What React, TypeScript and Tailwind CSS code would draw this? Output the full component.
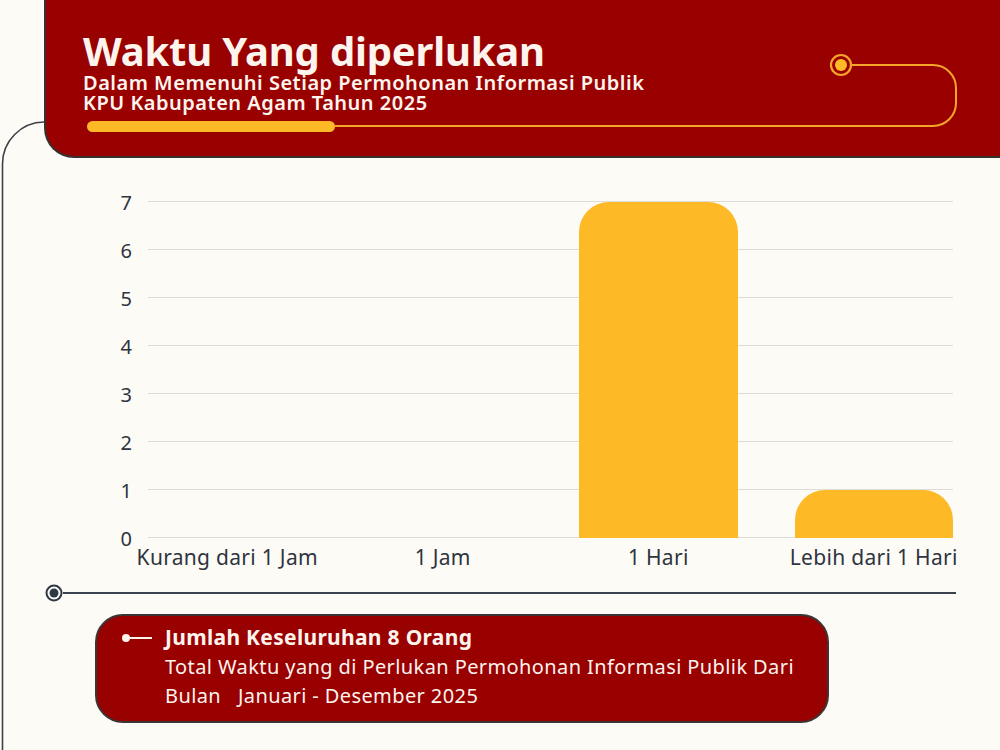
import React from "react";

const yTicks = [7, 6, 5, 4, 3, 2, 1, 0];
const data = [
  { label: "Kurang dari 1 Jam", value: 0 },
  { label: "1 Jam", value: 0 },
  { label: "1 Hari", value: 7 },
  { label: "Lebih dari 1 Hari", value: 1 },
];

export default function App() {
  return (
    <div className="relative w-[1000px] h-[750px] overflow-hidden bg-[#fdfbf6] font-['Noto_Sans',sans-serif]">
      {/* Header */}
      <div className="ml-[44px] w-[980px] h-[158px] bg-[#990000] border-l-2 border-b-2 border-[#3a2f2f] rounded-bl-[30px] pl-[37px] pt-[28px]">
        <h1 className="text-[40px] leading-[45px] font-bold text-[#fdf4ee] tracking-[-0.2px]">
          Waktu Yang diperlukan
        </h1>
        <p className="text-[20px] leading-[20px] font-semibold text-[#fdf4ee] tracking-[0.5px]">
          Dalam Memenuhi Setiap Permohonan Informasi Publik
        </p>
        <p className="text-[20px] leading-[20px] font-semibold text-[#fdf4ee] tracking-[0.5px]">
          KPU Kabupaten Agam Tahun 2025
        </p>
        <div className="mt-[8px] ml-[4px] w-[248px] h-[11px] rounded-full bg-[#fdb926]" />
      </div>

      {/* Chart */}
      <div className="relative mt-[43px]">
        <div className="flex flex-col gap-[47px]">
          {yTicks.map((t) => (
            <div key={t} className="flex items-center h-px">
              <div className="w-[148px] flex justify-end pr-[16px] pt-[3px] text-[20px] leading-none text-[#2e3440]">
                {t}
              </div>
              <div className="w-[805px] h-px bg-[#dedcd8]" />
            </div>
          ))}
        </div>
        <div className="absolute left-[148px] bottom-0 w-[805px] h-[337px] grid grid-cols-4 gap-[57px] items-end">
          {data.map((d) => (
            <div
              key={d.label}
              className="bg-[#fdb926] rounded-t-[30px]"
              style={{ height: d.value * 48 }}
            />
          ))}
        </div>
      </div>
      <div className="ml-[148px] mt-[5px] w-[805px] grid grid-cols-4 gap-[57px]">
        {data.map((d) => (
          <div key={d.label} className="flex justify-center whitespace-nowrap text-[21px] leading-[28px] tracking-[0.3px] text-[#2e3440]">
            {d.label}
          </div>
        ))}
      </div>

      {/* Divider with circle */}
      <div className="flex items-center ml-[45px] mt-[13px] w-[911px] h-[18px]">
        <svg width="18" height="18" viewBox="0 0 18 18" className="shrink-0">
          <circle cx="9" cy="9" r="7.5" fill="none" stroke="#2f3944" strokeWidth="2" />
          <circle cx="9" cy="9" r="4.5" fill="#2f3944" />
        </svg>
        <div className="flex-1 h-[2px] bg-[#3a434d]" />
      </div>

      {/* Summary box */}
      <div className="ml-[95px] mt-[12px] w-[734px] h-[109px] rounded-[28px] bg-[#990000] border-2 border-[#3b3535] pl-[25px] pt-[7px] text-[#fdf4ee]">
        <div className="flex items-center">
          <div className="flex items-center w-[30px] mr-[13px] shrink-0">
            <div className="w-[8px] h-[8px] rounded-full bg-[#fdf4ee]" />
            <div className="flex-1 h-[2px] bg-[#fdf4ee]" />
          </div>
          <div className="text-[21px] leading-[29px] font-bold tracking-[0.3px]">Jumlah Keseluruhan 8 Orang</div>
        </div>
        <div className="ml-[43px] text-[20px] leading-[29px] tracking-[0.4px]">
          <div>Total Waktu yang di Perlukan Permohonan Informasi Publik Dari</div>
          <div className="whitespace-pre">Bulan   Januari - Desember 2025</div>
        </div>
      </div>

      {/* Decorative lines */}
      <svg
        className="absolute left-0 top-0 pointer-events-none"
        width="1000"
        height="750"
        viewBox="0 0 1000 750"
      >
        <path d="M44 122 A42 42 0 0 0 2.5 164 V750" fill="none" stroke="#3d4149" strokeWidth="1.6" />
        <path
          d="M335 126 H933 A23 23 0 0 0 956 103 V88 A23 23 0 0 0 933 65 H852"
          fill="none"
          stroke="#f4a52a"
          strokeWidth="2"
        />
        <circle cx="841" cy="65" r="10" fill="none" stroke="#f4a52a" strokeWidth="2.2" />
        <circle cx="841" cy="65" r="6" fill="#fdb926" />
      </svg>
    </div>
  );
}
